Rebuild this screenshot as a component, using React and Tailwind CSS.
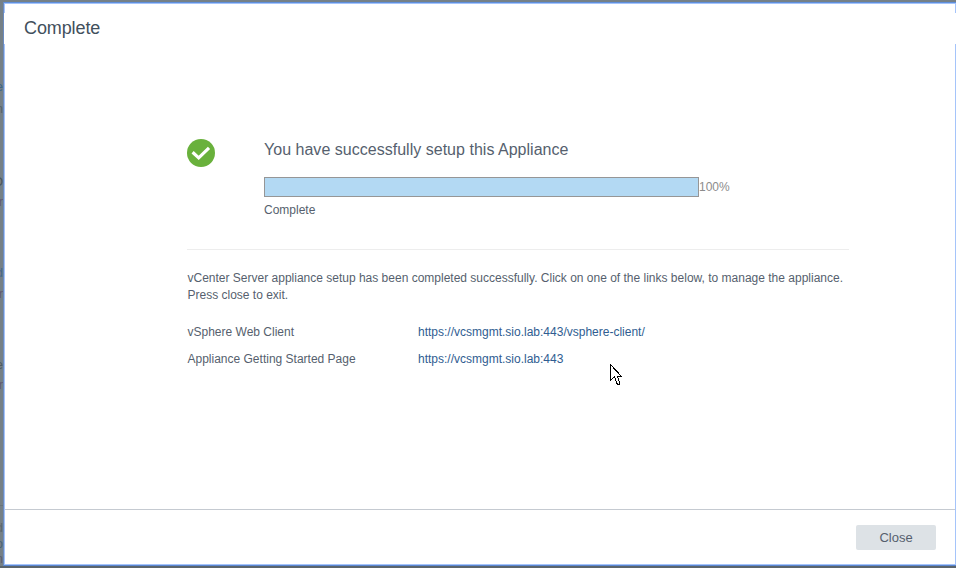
import React from "react";

const fragments = [
  { ch: "e", cls: "top-[79px] text-[#3d6587]" },
  { ch: "n", cls: "top-[101px] text-[#56626a]" },
  { ch: "O", cls: "top-[174px] text-[#4b565c]" },
  { ch: "r", cls: "top-[194px] text-[#625b70]" },
  { ch: "d", cls: "top-[265px] text-[#456789]" },
  { ch: "r", cls: "top-[286px] text-[#625b70]" },
  { ch: "e", cls: "top-[357px] text-[#505b61]" },
  { ch: "r", cls: "top-[377px] text-[#625b70]" },
  { ch: "d", cls: "top-[520px] text-[#5b666d]" },
  { ch: "o", cls: "top-[536px] text-[#496378]" },
  { ch: "n", cls: "top-[551px] text-[#5d5d70]" },
];

function Backdrop() {
  return (
    <div aria-hidden="true" className="absolute inset-y-0 left-0 w-[3px] overflow-hidden">
      {fragments.map((f, i) => (
        <span key={i} className={`absolute right-0 text-[13px] leading-[16px] ${f.cls}`}>
          {f.ch}
        </span>
      ))}
      <div className="absolute top-[505px] h-px w-full bg-[#68747a]" />
    </div>
  );
}

function SuccessIcon() {
  return (
    <svg className="block size-7" viewBox="0 0 28 28">
      <circle cx="14" cy="14" r="14" fill="#69b13c" />
      <path d="M5.6 13.3 L11.7 18.9 L22 8.9" fill="none" stroke="#fff" strokeWidth="3.2" />
    </svg>
  );
}

function Pointer() {
  return (
    <svg
      className="absolute left-[610px] top-[364px] h-[21px] w-3"
      viewBox="0 0 12 21"
      shapeRendering="crispEdges"
    >
      <path
        d="M.5 .5 V16.5 L4.5 12.8 L7 19.5 L8 20.5 L9.5 20 V18 L7.3 12.5 H11.5 Z"
        fill="#fff"
        stroke="#000"
        strokeWidth="1"
      />
    </svg>
  );
}

function LinkRow({ label, url }) {
  return (
    <div className="flex h-[27px]">
      <span className="w-[230.5px]">{label}</span>
      <a className="text-[#2f5d91]">{url}</a>
    </div>
  );
}

export default function App() {
  return (
    <div className="relative flex h-[568px] w-[956px] flex-col overflow-hidden bg-[#758087] font-['Liberation_Sans',Arial,sans-serif] text-[12px] leading-[17px] text-[#565f6e]">
      <Backdrop />
      <div className="ml-[3px] mt-0.5 h-[564px] shrink-0 border-y border-l border-t-[#5f8fdc] border-b-[#5a86d0] border-l-[#6b8bc0]">
        <div className="flex h-full flex-col border border-[#a5c4fa] bg-white">
          <div className="h-[505px] shrink-0">
            <header className="relative top-[9px] -mx-px h-[31px] bg-white pl-5">
              <h1 className="pt-1 text-[18px] leading-[22px] tracking-[-0.1px] text-[#42505c]">Complete</h1>
            </header>
            <main className="ml-[182px] mt-[103px] w-[662px]">
              <section className="flex h-[112px] border-b border-[#ededed]">
                <div className="w-[77px] pt-px">
                  <SuccessIcon />
                </div>
                <div>
                  <h2 className="pt-[2px] text-[16px] leading-[20px] tracking-[0.02px]">
                    You have successfully setup this Appliance
                  </h2>
                  <div className="mt-[17px] flex items-center">
                    <div className="h-5 w-[435px] border border-[#969696] bg-[#b3d9f3]" />
                    <span className="text-[#8c8c8c]">100%</span>
                  </div>
                  <div className="mt-[5px]">Complete</div>
                </div>
              </section>
              <p className="mt-5 w-[670px] pl-[.5px]">
                vCenter Server appliance setup has been completed successfully. Click on one of the links below, to manage the appliance.
                <br />
                Press close to exit.
              </p>
              <section className="mt-5 pl-[.5px]">
                <LinkRow label="vSphere Web Client" url="https://vcsmgmt.sio.lab:443/vsphere-client/" />
                <LinkRow label="Appliance Getting Started Page" url="https://vcsmgmt.sio.lab:443" />
              </section>
            </main>
          </div>
          <footer className="flex flex-1 items-start justify-end border-t border-[#c5cad1] pr-[19px] pt-[15px]">
            <button className="h-[25px] w-20 rounded-[2px] bg-[#dde2e6] text-[13px] leading-[25px] text-[#565f6e]">
              Close
            </button>
          </footer>
        </div>
      </div>
      <div className="h-0.5 shrink-0 bg-[#5b656c]" />
      <Pointer />
    </div>
  );
}
